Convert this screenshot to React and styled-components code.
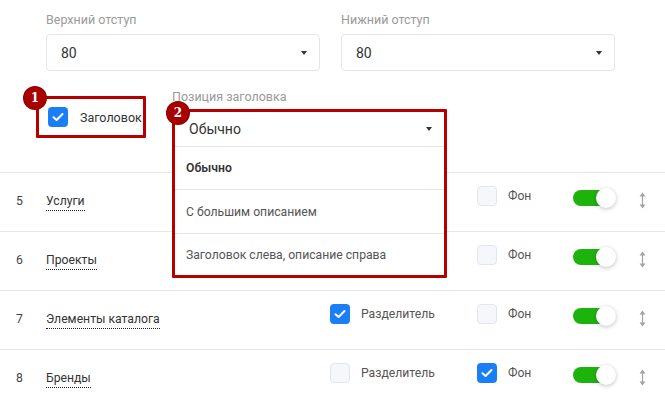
import styled, { createGlobalStyle } from 'styled-components';

const GlobalStyle = createGlobalStyle`
  body {
    margin: 0;
    background: #fff;
    font-family: Roboto, "Noto Sans", sans-serif;
    color: #333;
  }
`;

const Page = styled.div`
  width: 665px;
  height: 406px;
  overflow: hidden;
  background: #fff;
`;

const Settings = styled.div`
  padding: 12px 0 0 46px;
  height: 172px;
  box-sizing: border-box;
`;

const FieldGrid = styled.div`
  display: grid;
  grid-template-columns: 274px 274px;
  column-gap: 21px;
`;

const Field = styled.div`
  display: flex;
  flex-direction: column;
`;

const Label = styled.div`
  font-size: 12.5px;
  line-height: 16px;
  color: #9a9a9a;
  margin-bottom: ${p => p.$gap || 6}px;
`;

const SelectBox = styled.div`
  display: flex;
  align-items: center;
  justify-content: space-between;
  height: ${p => p.$h || 37}px;
  padding: 0 12px 0 14px;
  border: ${p => (p.$bare ? 'none' : '1px solid #e6e6e6')};
  border-bottom: 1px solid #e6e6e6;
  border-radius: ${p => (p.$bare ? 0 : 4)}px;
  box-sizing: border-box;
  font-size: 14px;
  color: #333;
  background: #fff;
`;

const Caret = styled.span`
  width: 0;
  height: 0;
  border-left: 3px solid transparent;
  border-right: 3px solid transparent;
  border-top: 4px solid #333;
`;

const HeaderRow = styled.div`
  display: flex;
  align-items: flex-start;
  margin-top: 25px;
  margin-left: -10px;
`;

const Highlight = styled.div`
  position: relative;
  border: 3px solid #b50000;
  border-radius: 1px;
`;

const CheckHighlight = styled(Highlight)`
  width: 110px;
  box-sizing: border-box;
`;

const Badge = styled.span`
  position: absolute;
  left: ${p => p.$x}px;
  top: ${p => p.$y}px;
  width: 22px;
  height: 22px;
  border-radius: 50%;
  background: #a80000;
  box-shadow: 0 0 0 1px #8a0000;
  color: #fff;
  font-family: "DejaVu Serif", serif;
  font-weight: bold;
  font-size: 12px;
  line-height: 22px;
  text-align: center;
  z-index: 3;
`;

const CheckGroup = styled.label`
  display: flex;
  align-items: center;
  gap: 12px;
  padding: 8px 0 8px 9px;
  font-size: 12.5px;
  color: #333;
  white-space: nowrap;
`;

const Box = styled.span`
  display: inline-flex;
  align-items: center;
  justify-content: center;
  flex: none;
  width: 20px;
  height: 20px;
  border-radius: 4px;
  box-sizing: border-box;
  background: ${p => (p.$on ? '#1a7ff7' : '#f5f7fb')};
  border: ${p => (p.$on ? 'none' : '1px solid #e2e6f0')};
`;

const PositionField = styled.div`
  margin-left: 26px;
  margin-top: -7px;
  width: 275px;
`;

const SelectAnchor = styled.div`
  position: relative;
  height: 38px;
`;

const Menu = styled(Highlight)`
  position: absolute;
  top: 0;
  left: 0;
  right: 0;
  background: #fff;
  z-index: 2;
`;

const Option = styled.div`
  height: ${p => p.$h}px;
  display: flex;
  align-items: center;
  padding: 0 11px;
  font-size: 12.2px;
  font-weight: ${p => (p.$active ? 600 : 400)};
  color: ${p => (p.$active ? '#333' : '#555')};
  border-top: ${p => (p.$first ? 'none' : '1px solid #e6e6e6')};
`;

const Table = styled.div`
  display: flex;
  flex-direction: column;
`;

const Row = styled.div`
  display: grid;
  grid-template-columns: 30px 284px 147px 96px 69px 1fr;
  align-items: start;
  height: 59px;
  padding: 13px 0 0 16px;
  box-sizing: border-box;
  border-top: 1px solid #e6e6e6;
  font-size: 12.2px;
`;

const Num = styled.span`
  margin-top: 7px;
  color: #444;
  line-height: 16px;
`;

const Name = styled.span`
  display: inline-block;
  justify-self: start;
  margin-top: 7px;
  line-height: 16px;
  color: #333;
  padding-bottom: 1px;
  border-bottom: 1px dotted #222;
`;

const Option2 = styled.div`
  display: flex;
  align-items: center;
  gap: 11px;
  color: #555;
  line-height: 20px;
`;

const Toggle = styled.span`
  position: relative;
  display: block;
  margin-top: 4px;
  width: 34px;
  height: 16px;
  border-radius: 8px;
  background: #1eb30c;

  &::after {
    content: '';
    position: absolute;
    right: -9px;
    top: -2px;
    width: 20px;
    height: 20px;
    border-radius: 50%;
    background: #fff;
    box-shadow: 0 1px 4px rgba(0, 0, 0, 0.25);
  }
`;

const Handle = styled.span`
  display: block;
  margin-top: 6px;
  margin-left: -3px;
  color: #a3a3a3;
  line-height: 0;
`;

const Check = () => (
  <svg width="12" height="10" viewBox="0 0 12 10">
    <path d="M1.5 5.2 L4.6 8 L10.5 2" fill="none" stroke="#fff" strokeWidth="2" strokeLinecap="round" strokeLinejoin="round" />
  </svg>
);

const Checkbox = ({ on }) => <Box $on={on}>{on && <Check />}</Box>;

const MoveIcon = () => (
  <svg width="7" height="17" viewBox="0 0 7 17">
    <path d="M3.5 0.5 L6.5 4.5 H0.5 Z M3.5 16.5 L6.5 12.5 H0.5 Z" fill="currentColor" />
    <line x1="3.5" y1="4" x2="3.5" y2="13" stroke="currentColor" strokeWidth="1.2" />
  </svg>
);

const rows = [
  { n: 5, name: 'Услуги', divider: null, bg: false },
  { n: 6, name: 'Проекты', divider: null, bg: false },
  { n: 7, name: 'Элементы каталога', divider: true, bg: false },
  { n: 8, name: 'Бренды', divider: false, bg: true },
];

export default function App() {
  return (
    <Page>
      <GlobalStyle />
      <Settings>
        <FieldGrid>
          <Field>
            <Label>Верхний отступ</Label>
            <SelectBox>80<Caret /></SelectBox>
          </Field>
          <Field>
            <Label>Нижний отступ</Label>
            <SelectBox>80<Caret /></SelectBox>
          </Field>
        </FieldGrid>

        <HeaderRow>
          <CheckHighlight>
            <Badge $x={-15} $y={-12}>1</Badge>
            <CheckGroup>
              <Checkbox on />
              Заголовок
            </CheckGroup>
          </CheckHighlight>

          <PositionField>
            <Label $gap={4}>Позиция заголовка</Label>
            <SelectAnchor>
              <Menu>
                <Badge $x={-8} $y={-10}>2</Badge>
                <SelectBox $bare $h={35}>Обычно<Caret /></SelectBox>
                <Option $first $active $h={42}>Обычно</Option>
                <Option $h={43}>С большим описанием</Option>
                <Option $h={41}>Заголовок слева, описание справа</Option>
              </Menu>
            </SelectAnchor>
          </PositionField>
        </HeaderRow>
      </Settings>

      <Table>
        {rows.map(r => (
          <Row key={r.n}>
            <Num>{r.n}</Num>
            <div>
              <Name>{r.name}</Name>
            </div>
            {r.divider === null ? (
              <span />
            ) : (
              <Option2>
                <Checkbox on={r.divider} />
                Разделитель
              </Option2>
            )}
            <Option2>
              <Checkbox on={r.bg} />
              Фон
            </Option2>
            <Toggle />
            <Handle><MoveIcon /></Handle>
          </Row>
        ))}
      </Table>
    </Page>
  );
}
